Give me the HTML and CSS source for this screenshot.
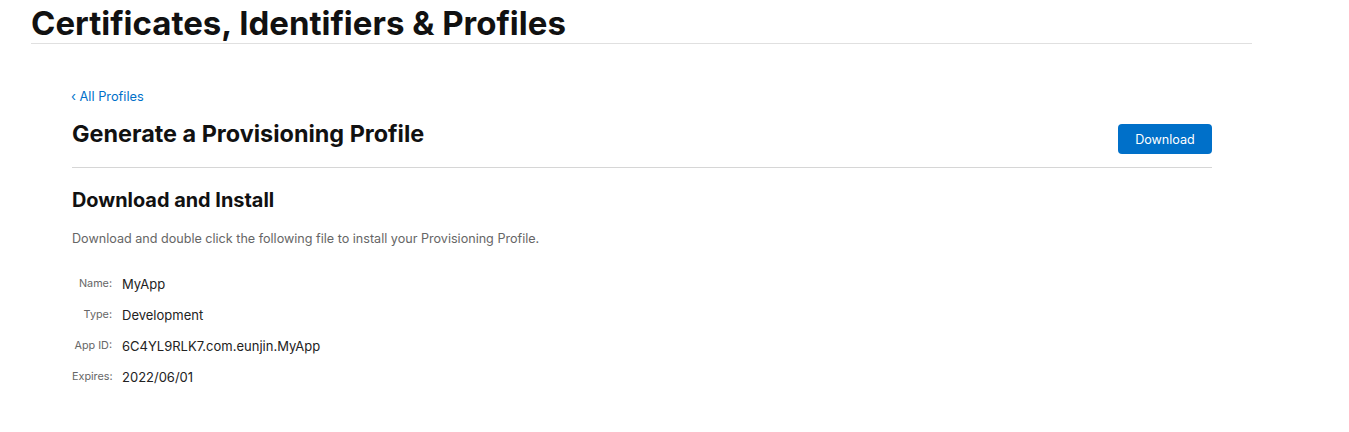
FILE: index.html
```html
<!DOCTYPE html>
<html lang="en">
<head>
<meta charset="utf-8">
<title>Certificates, Identifiers &amp; Profiles</title>
<link rel="stylesheet" href="styles.css">
</head>
<body>
<header class="page-header">
  <h1 class="page-title">Certificates, Identifiers &amp; Profiles</h1>
</header>
<main class="content">
  <a class="back-link" href="#">‹ All Profiles</a>
  <div class="title-row">
    <h2 class="section-title">Generate a Provisioning Profile</h2>
    <button class="btn-primary" type="button">Download</button>
  </div>
  <h3 class="sub-title">Download and Install</h3>
  <p class="description">Download and double click the following file to install your Provisioning Profile.</p>
  <dl class="details">
    <dt>Name:</dt><dd>MyApp</dd>
    <dt>Type:</dt><dd>Development</dd>
    <dt>App ID:</dt><dd>6C4YL9RLK7.com.eunjin.MyApp</dd>
    <dt>Expires:</dt><dd>2022/06/01</dd>
  </dl>
</main>
</body>
</html>
```
FILE: styles.css
```css
* { box-sizing: border-box; }
html, body { margin: 0; padding: 0; background: #fff; }
body {
  font-family: Inter, "Noto Sans", "Liberation Sans", sans-serif;
  color: #1d1d1f;
}
.page-header {
  margin-left: 31px;
  width: 1221px;
  border-bottom: 1px solid #e0e0e0;
  height: 44px;
}
.page-title {
  margin: 0;
  padding-top: 4px;
  font-size: 33px;
  line-height: 38px;
  font-weight: 700;
  color: #111;
}
.content {
  margin-left: 72px;
  width: 1140px;
  padding-top: 45px;
}
.back-link {
  display: block;
  font-size: 12.8px;
  line-height: 16px;
  color: #0070c9;
  text-decoration: none;
  margin-left: -1px;
}
.title-row {
  display: flex;
  justify-content: space-between;
  align-items: flex-start;
  margin-top: 14px;
  padding-bottom: 13px;
  border-bottom: 1px solid #d6d6d6;
}
.section-title {
  margin: 0;
  font-size: 23.4px;
  line-height: 30px;
  font-weight: 700;
  color: #111;
}
.btn-primary {
  width: 94px;
  height: 30px;
  border: 0;
  border-radius: 4px;
  background: #0070c9;
  color: #fff;
  font-family: inherit;
  font-size: 12.6px;
  padding: 0;
  margin-top: 5px;
}
.sub-title {
  margin: 19px 0 0;
  font-size: 19.9px;
  line-height: 26px;
  font-weight: 700;
  color: #111;
}
.description {
  margin: 18px 0 0;
  font-size: 12.6px;
  line-height: 16px;
  color: #666;
}
.details {
  display: grid;
  grid-template-columns: 40px auto;
  column-gap: 10px;
  row-gap: 13px;
  margin: 28px 0 0;
  align-items: center;
}
.details dt {
  text-align: right;
  font-size: 10.8px;
  line-height: 18px;
  color: #666;
}
.details dd {
  margin: 0;
  font-size: 13px;
  line-height: 18px;
  color: #222;
}
```
